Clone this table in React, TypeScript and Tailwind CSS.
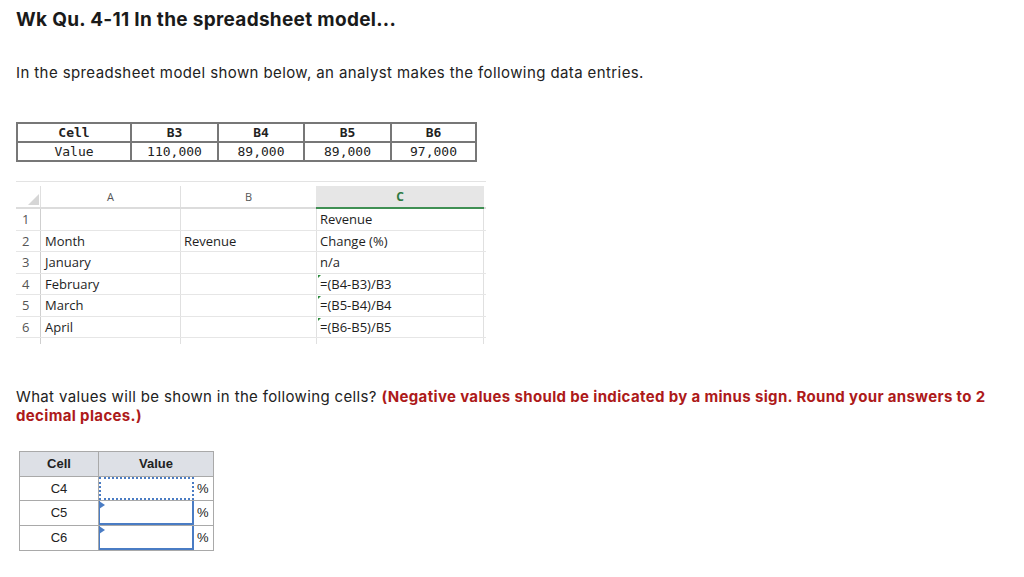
import React from 'react';

const months = ['', 'Month', 'January', 'February', 'March', 'April'];
const colB = ['', 'Revenue', '', '', '', ''];
const colC = ['Revenue', 'Change (%)', 'n/a', '=(B4-B3)/B3', '=(B5-B4)/B4', '=(B6-B5)/B5'];

const App: React.FC = () => {
  return (
    <div className="w-[1024px] h-[577px] bg-white text-[#222] overflow-hidden" style={{ fontFamily: 'Inter, "Open Sans", sans-serif' }}>
      <div className="pl-4 pt-[8px]">
        <h1 className="text-[19px] font-bold leading-6 text-[#1a1a1a] tracking-[0.3px]">Wk Qu. 4-11 In the spreadsheet model...</h1>
        <p className="mt-[31px] text-[15px] leading-5 tracking-[0.4px]">In the spreadsheet model shown below, an analyst makes the following data entries.</p>

        {/* given values */}
        <table className="mt-[39px] border-collapse text-[13px] leading-[17px]" style={{ fontFamily: '"DejaVu Sans Mono", monospace' }}>
          <tbody>
            <tr className="font-bold">
              <td className="w-[114px] border-2 border-[#777] text-center">Cell</td>
              <td className="w-[87px] border-2 border-[#777] text-center">B3</td>
              <td className="w-[86px] border-2 border-[#777] text-center">B4</td>
              <td className="w-[87px] border-2 border-[#777] text-center">B5</td>
              <td className="w-[85px] border-2 border-[#777] text-center">B6</td>
            </tr>
            <tr>
              <td className="border-2 border-[#777] text-center">Value</td>
              <td className="border-2 border-[#777] text-center">110,000</td>
              <td className="border-2 border-[#777] text-center">89,000</td>
              <td className="border-2 border-[#777] text-center">89,000</td>
              <td className="border-2 border-[#777] text-center">97,000</td>
            </tr>
          </tbody>
        </table>

        {/* spreadsheet picture */}
        <div className="mt-[19px] w-[470px] text-[13px] text-[#1e1e1e]" style={{ fontFamily: '"Open Sans", sans-serif' }}>
          <div className="h-[5px] border-t border-[#e3e3e3]" />
          <div className="flex h-[23px] border-b-2 border-[#dcdcdc]">
            <div className="w-[24px] flex items-end justify-end pr-[1px] pb-[2px]">
              <div className="w-0 h-0 border-l-[11px] border-l-transparent border-b-[11px] border-b-[#d6d6d6]" />
            </div>
            <div className="w-[140px] border-l border-[#e0e0e0] text-center text-[11px] text-[#555] leading-[22px]">A</div>
            <div className="w-[136px] border-l border-[#e0e0e0] text-center text-[11px] text-[#555] leading-[22px]">B</div>
            <div className="w-[168px] -mb-[2px] bg-[#e6e6e6] border-b-2 border-[#3f8f53] text-center text-[12px] font-bold text-[#2f7a43] leading-[22px]">C</div>
          </div>
          {colC.map((c, i) => (
            <div key={i} className="flex h-[21.5px] border-b border-[#e6e6e6] leading-[21px]">
              <div className="w-[24px] pl-[6px] text-[#555]">{i + 1}</div>
              <div className="w-[140px] border-l border-[#cfcfcf] pl-[4px]">{months[i]}</div>
              <div className="w-[136px] border-l border-[#e0e0e0] pl-[3px]">{colB[i]}</div>
              <div className="relative w-[168px] border-x border-[#e0e0e0] pl-[3px]">
                {i >= 3 && <span className="absolute left-[1px] top-[1px] w-0 h-0 border-r-[3px] border-r-transparent border-t-[3px] border-t-[#2e8b3e]" />}
                {c}
              </div>
            </div>
          ))}
          <div className="flex h-[6px]">
            <div className="w-[24px]" />
            <div className="w-[140px] border-l border-[#cfcfcf]" />
            <div className="w-[136px] border-l border-[#e0e0e0]" />
            <div className="w-[168px] border-x border-[#e0e0e0]" />
          </div>
        </div>

        <p className="mt-[43px] text-[15px] leading-[19px] pr-4 tracking-[0.35px]">
          What values will be shown in the following cells?{' '}
          <strong className="text-[#ad1a1a]">(Negative values should be indicated by a minus sign. Round your answers to 2 decimal places.)</strong>
        </p>

        {/* answer table */}
        <div className="mt-[26px] ml-[3px] w-[195px] border border-[#a9a9a9] text-[13px]" style={{ fontFamily: '"Liberation Sans", Arial, sans-serif' }}>
          <div className="flex h-[25px] bg-[#dde0e6] font-bold border-b border-[#a9a9a9]">
            <div className="w-[79px] border-r border-[#a9a9a9] flex items-center justify-center">Cell</div>
            <div className="flex-1 flex items-center justify-center">Value</div>
          </div>
          {['C4', 'C5', 'C6'].map((c, i) => (
            <div key={c} className={`flex h-[24.3px] ${i < 2 ? 'border-b border-[#a9a9a9]' : ''}`}>
              <div className="w-[79px] border-r border-[#a9a9a9] flex items-center justify-center">{c}</div>
              <div className="flex-1 flex items-center">
                <div className={`relative w-[95px] h-full ${i === 0 ? 'border-2 border-dotted border-[#4a7cc4]' : 'border-2 border-[#4a7cc4] border-t-0 border-l'}`}>
                  {i > 0 && <span className="absolute -left-[1px] top-0 w-0 h-0 border-t-[4px] border-t-transparent border-b-[4px] border-b-transparent border-l-[6px] border-l-[#4a7cc4]" />}
                </div>
                <span className="pl-[3px]">%</span>
              </div>
            </div>
          ))}
        </div>
      </div>
    </div>
  );
};

export default App;
